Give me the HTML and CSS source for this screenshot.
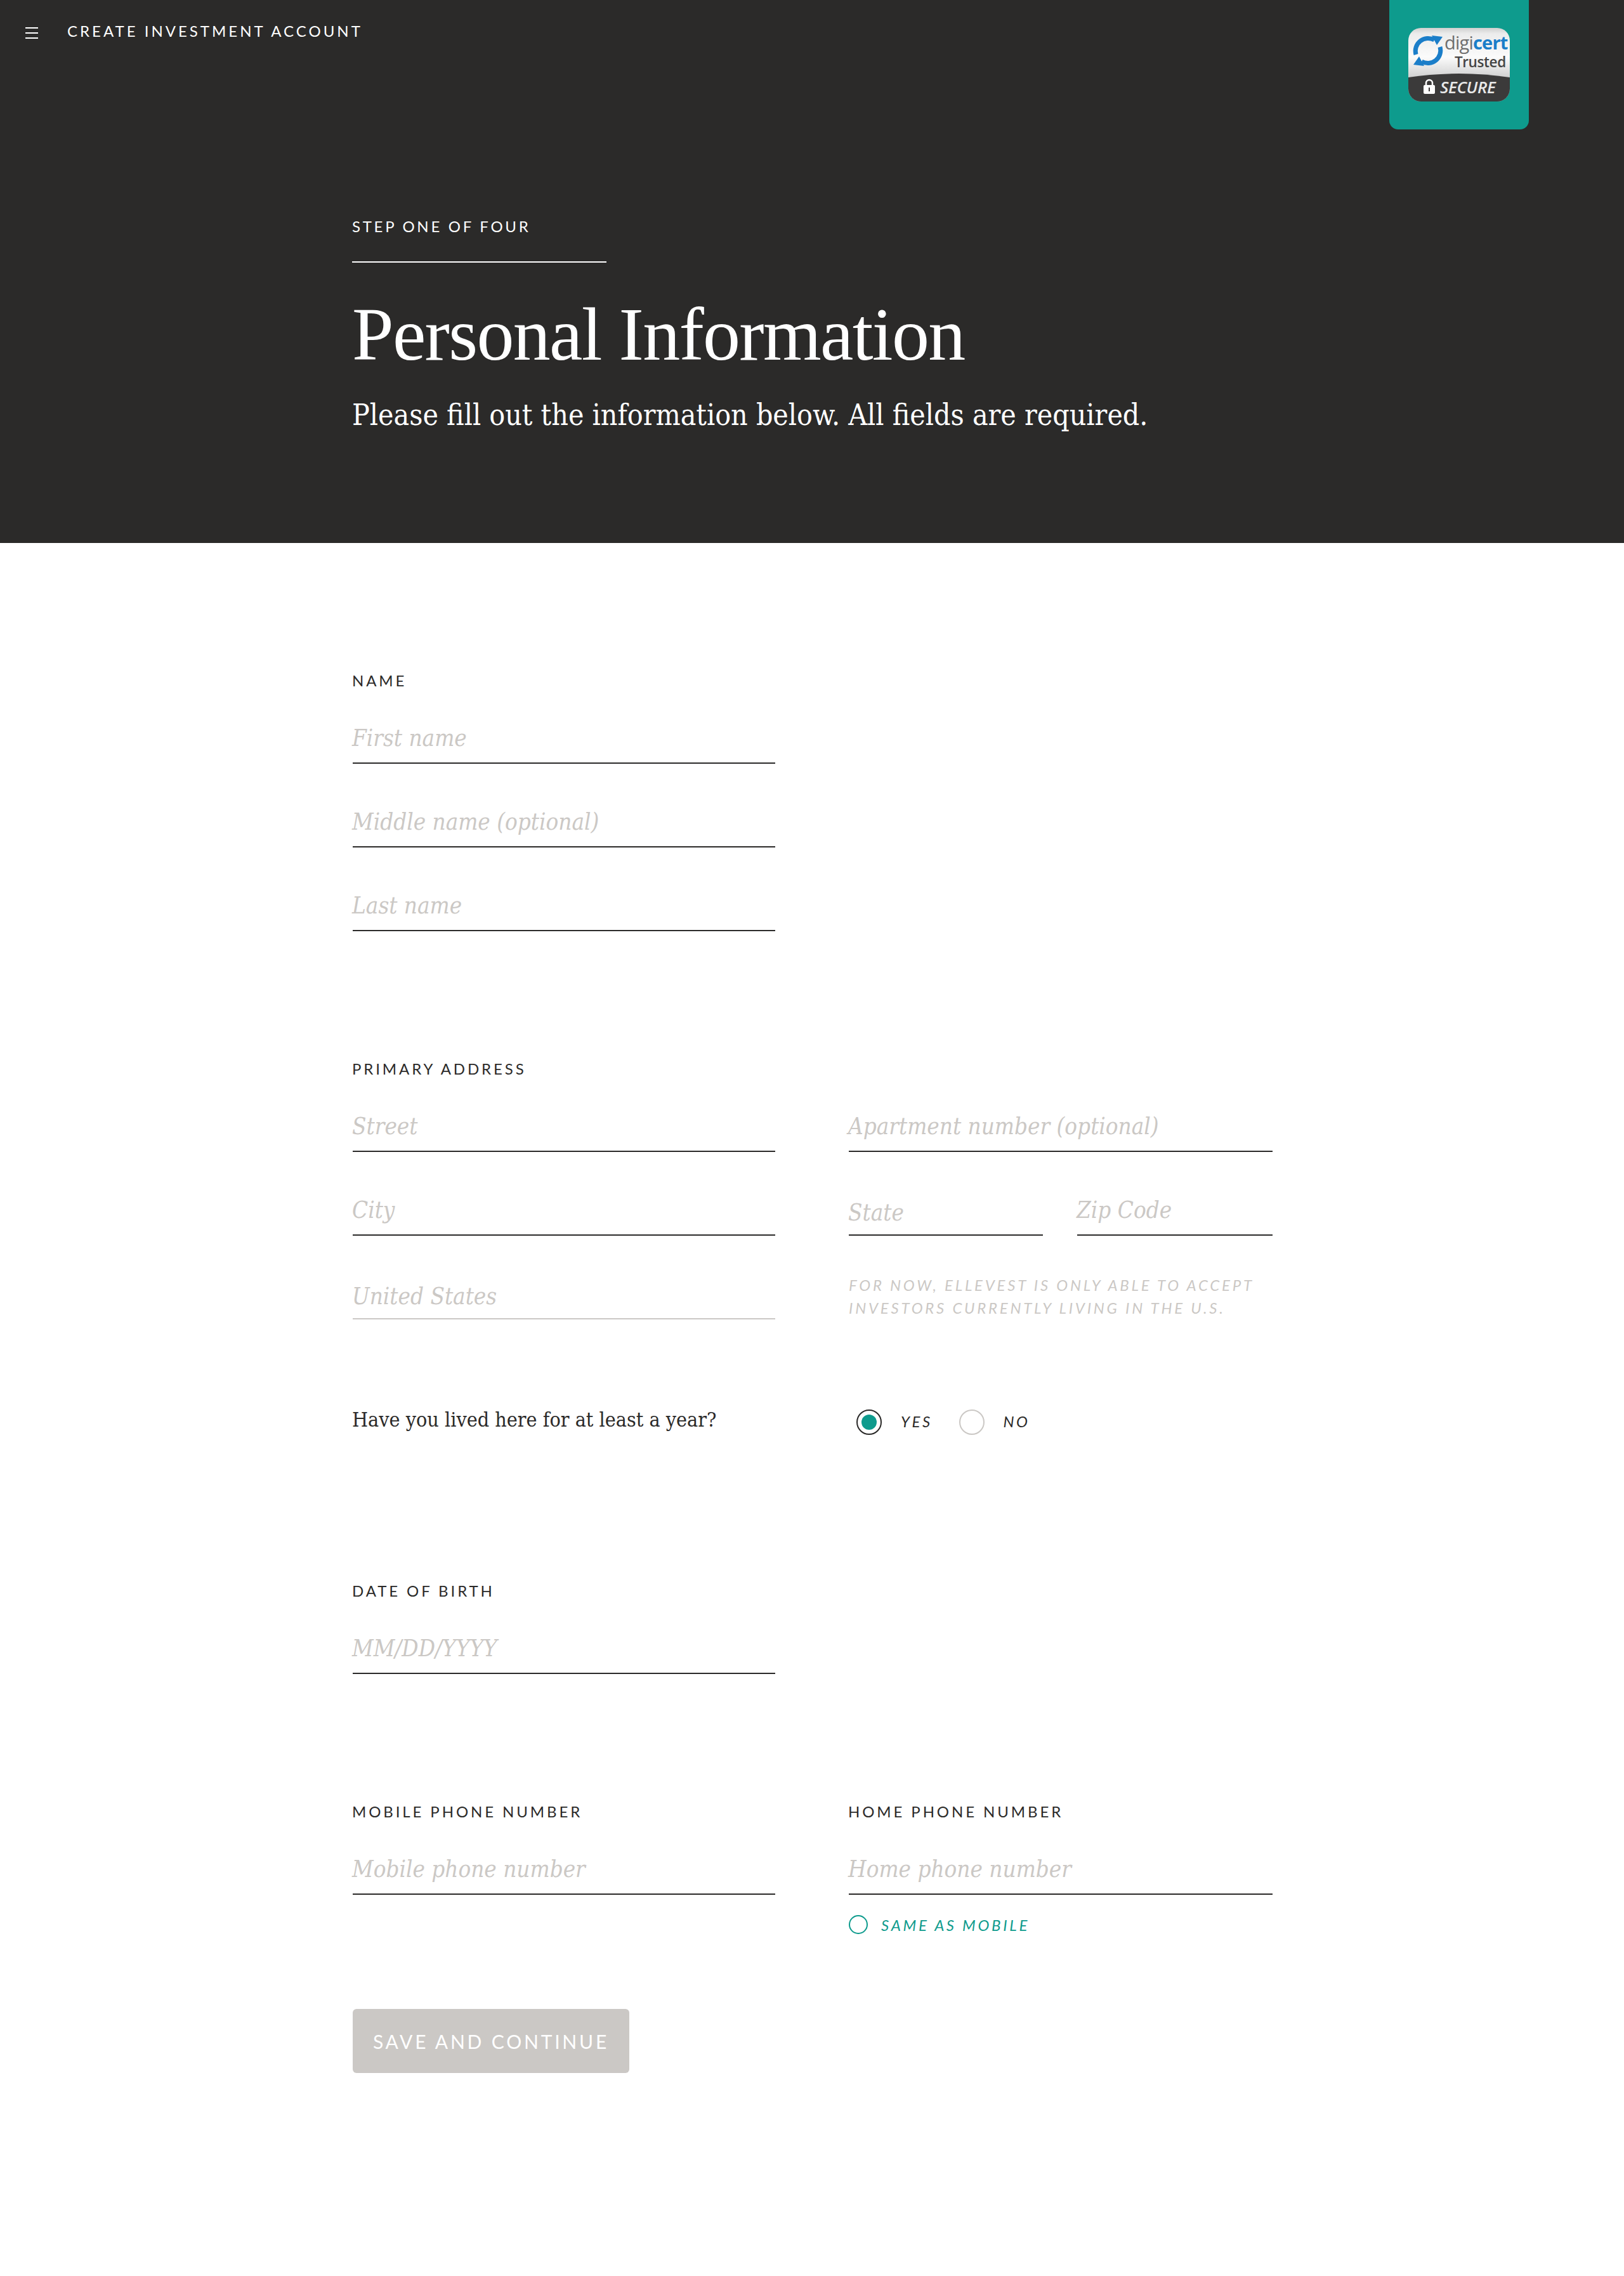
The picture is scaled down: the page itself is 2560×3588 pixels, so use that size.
FILE: index.html
```html
<!DOCTYPE html>
<html lang="en">
<head>
<meta charset="utf-8">
<title>Create Investment Account</title>
<link rel="stylesheet" href="styles.css">
</head>
<body>
<header class="hero">
  <div class="topbar">
    <div class="burger"><span></span><span></span><span></span></div>
    <div class="topbar-title">CREATE INVESTMENT ACCOUNT</div>
  </div>
  <div class="seal">
    <svg class="seal-img" width="160" height="116" viewBox="0 0 160 116">
      <defs>
        <linearGradient id="silver" x1="0" y1="0" x2="0" y2="1">
          <stop offset="0" stop-color="#cfd0cf"/>
          <stop offset=".08" stop-color="#ececec"/>
          <stop offset=".4" stop-color="#fbfbfb"/>
          <stop offset=".68" stop-color="#cfcfcf"/>
        </linearGradient>
      </defs>
      <rect width="160" height="116" rx="20" fill="url(#silver)"/>
      <path d="M0 78 Q80 66 160 78 V96 A20 20 0 0 1 140 116 H20 A20 20 0 0 1 0 96Z" fill="#3b3a3a"/>
      <g fill="none" stroke="#1b7ec9" stroke-width="7">
        <path d="M12 42 A20 20 0 0 1 41 19"/>
        <path d="M12 42 A20 20 0 0 1 41 19" transform="rotate(180 31 36)"/>
      </g>
      <g fill="#1b7ec9">
        <path d="M37 12 L54 14 L45 27Z"/>
        <path d="M37 12 L54 14 L45 27Z" transform="rotate(180 31 36)"/>
      </g>
      <text class="seal-digi" x="57" y="34">digi<tspan class="seal-cert">cert</tspan></text>
      <text class="seal-trusted" x="73" y="62">Trusted</text>
      <text class="seal-secure" x="50" y="103">SECURE</text>
      <rect x="24" y="90" width="18" height="14" rx="2" fill="#fff"/>
      <path d="M28 91 V87 A5 5 0 0 1 38 87 V91" fill="none" stroke="#fff" stroke-width="2.5"/>
      <rect x="32" y="94" width="2" height="6" fill="#3b3a3a"/>
    </svg>
  </div>
  <div class="intro">
    <div class="step">STEP ONE OF FOUR</div>
    <h1 class="title">Personal Information</h1>
    <p class="subtitle">Please fill out the information below. All fields are required.</p>
  </div>
</header>
<main class="form">
  <section class="group group-name">
    <div class="label">NAME</div>
    <div class="stack">
      <div class="field"><span class="ph">First name</span></div>
      <div class="field"><span class="ph">Middle name (optional)</span></div>
      <div class="field"><span class="ph">Last name</span></div>
    </div>
  </section>
  <section class="group group-address">
    <div class="label">PRIMARY ADDRESS</div>
    <div class="columns">
      <div class="field"><span class="ph">Street</span></div>
      <div class="field"><span class="ph">Apartment number (optional)</span></div>
      <div class="field"><span class="ph">City</span></div>
      <div class="pair">
        <div class="field field-select"><span class="ph">State</span></div>
        <div class="field"><span class="ph">Zip Code</span></div>
      </div>
      <div class="field field-select field-disabled"><span class="ph">United States</span></div>
      <p class="hint">FOR NOW, ELLEVEST IS ONLY ABLE TO ACCEPT INVESTORS CURRENTLY LIVING IN THE U.S.</p>
    </div>
    <div class="columns question">
      <div class="question-text">Have you lived here for at least a year?</div>
      <div class="radios">
        <span class="radio radio-on"></span><span class="radio-label">YES</span>
        <span class="radio"></span><span class="radio-label">NO</span>
      </div>
    </div>
  </section>
  <section class="group group-dob">
    <div class="label">DATE OF BIRTH</div>
    <div class="stack">
      <div class="field"><span class="ph">MM/DD/YYYY</span></div>
    </div>
  </section>
  <section class="group group-phone columns">
    <div>
      <div class="label">MOBILE PHONE NUMBER</div>
      <div class="field"><span class="ph">Mobile phone number</span></div>
    </div>
    <div>
      <div class="label">HOME PHONE NUMBER</div>
      <div class="field"><span class="ph">Home phone number</span></div>
      <div class="same"><span class="same-dot"></span><span class="same-label">SAME AS MOBILE</span></div>
    </div>
  </section>
  <button class="save" type="button">SAVE AND CONTINUE</button>
</main>
</body>
</html>
```
FILE: styles.css
```css
* { box-sizing: border-box; }
html, body { margin: 0; padding: 0; background: #fff; }
body { min-height: 3588px; font-family: "Lato", sans-serif; color: #2b2a29; }

.hero { position: relative; height: 856px; background: #2b2a29; color: #fff; }
.topbar { display: flex; align-items: center; padding: 34px 0 0 40px; height: 64px; gap: 46px; }
.burger { display: flex; flex-direction: column; justify-content: space-between; width: 20px; height: 18px; margin-top: 6px; }
.burger span { display: block; height: 2px; background: #fff; }
.topbar-title { font-size: 24px; line-height: 30px; letter-spacing: 4px; white-space: nowrap; }

.seal { position: absolute; left: 2190px; top: 0; width: 220px; height: 204px; padding: 44px 30px 0; background: #0e9b8d; border-radius: 0 0 14px 14px; }
.seal-img { display: block; }
.seal-digi { font: 400 29px "Open Sans", sans-serif; fill: #6f6f6f; letter-spacing: -.8px; }
.seal-cert { font-weight: 700; fill: #1b7ec9; }
.seal-trusted { font: 600 22.5px "Open Sans", sans-serif; fill: #454545; letter-spacing: -.4px; }
.seal-secure { font: italic 600 26px "Open Sans", sans-serif; fill: #e8e8e8; letter-spacing: -.4px; }

.intro { padding: 279px 0 0 555px; }
.step { width: 401px; height: 71px; font-size: 24px; line-height: 28px; letter-spacing: 3.7px; border-bottom: 2px solid #fff; white-space: nowrap; }
.title { margin: 49px 0 0; font: 400 118px/130px "Liberation Serif", serif; letter-spacing: -1.7px; white-space: nowrap; }
.subtitle { margin: 33px 0 0; font: 400 46px/56px "DejaVu Serif", serif; font-stretch: condensed; white-space: nowrap; }

.form { padding: 0 0 0 556px; width: 2006px; }
.label { font-size: 24px; line-height: 30px; letter-spacing: 3.9px; margin-bottom: 30px; margin-left: -1px; color: #2b2a29; white-space: nowrap; }
.group-name { padding-top: 202px; }
.group-address { margin-top: 202px; }
.group-dob { margin-top: 231px; }
.group-phone { margin-top: 202px; }
.stack { display: flex; flex-direction: column; gap: 46px; width: 666px; }
.columns { display: grid; grid-template-columns: 666px 668px; column-gap: 116px; row-gap: 46px; }

.field { display: flex; align-items: flex-end; height: 86px; padding-bottom: 16px; border-bottom: 2px solid #2b2a29; }
.field-select { padding-bottom: 12px; }
.field-disabled { border-bottom-color: #cbc8c5; }
.ph { margin-left: -1px; font: italic 400 36.5px/44px "DejaVu Serif", serif; font-stretch: condensed; color: #cbc8c5; white-space: nowrap; }
.pair { display: grid; grid-template-columns: 306px 308px; column-gap: 54px; }

.hint { align-self: end; margin: 0; font-size: 24px; font-style: italic; line-height: 36px; letter-spacing: 3.75px; color: #cbc8c5; }

.question { margin-top: 142px; align-items: center; height: 40px; }
.question-text { margin: -8px 0 0 -1px; font: 400 32px/40px "DejaVu Serif", serif; font-stretch: condensed; white-space: nowrap; }
.radios { display: flex; align-items: center; padding-left: 12px; }
.radio { position: relative; display: block; width: 40px; height: 40px; border: 2px solid #cbc8c5; border-radius: 50%; }
.radio-on { border-color: #2b2a29; }
.radio-on::after { content: ""; position: absolute; left: 6px; top: 6px; width: 24px; height: 24px; border-radius: 50%; background: #0e9b8d; }
.radio-label { margin: -3px 42px 0 30px; font-size: 24px; font-style: italic; letter-spacing: 3.5px; }

.same { display: flex; align-items: center; margin-top: 32px; height: 30px; gap: 21px; color: #0e9b8d; }
.same-dot { width: 30px; height: 30px; border: 2px solid #0e9b8d; border-radius: 50%; }
.same-label { font-size: 24px; font-style: italic; letter-spacing: 3.7px; white-space: nowrap; }

.save { display: block; width: 436px; height: 101px; margin: 118px 0 0; padding: 0; border: 0; border-radius: 6px; background: #cbc8c5; color: #fff; font: 400 30px "Lato", sans-serif; letter-spacing: 3.8px; text-align: center; }
```
